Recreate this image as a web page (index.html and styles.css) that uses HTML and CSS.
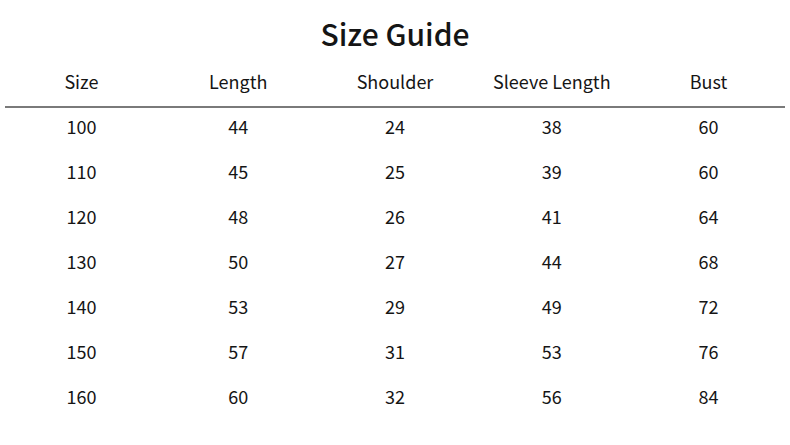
FILE: index.html
```html
<!DOCTYPE html>
<html>
<head>
<meta charset="utf-8">
<link rel="stylesheet" href="styles.css">
</head>
<body>
<div class="page">
  <h1 class="title">Size Guide</h1>
  <div class="row head">
    <div>Size</div><div>Length</div><div>Shoulder</div><div>Sleeve Length</div><div>Bust</div>
  </div>
  <div class="rule"></div>
  <div class="row"><div>100</div><div>44</div><div>24</div><div>38</div><div>60</div></div>
  <div class="row"><div>110</div><div>45</div><div>25</div><div>39</div><div>60</div></div>
  <div class="row"><div>120</div><div>48</div><div>26</div><div>41</div><div>64</div></div>
  <div class="row"><div>130</div><div>50</div><div>27</div><div>44</div><div>68</div></div>
  <div class="row"><div>140</div><div>53</div><div>29</div><div>49</div><div>72</div></div>
  <div class="row"><div>150</div><div>57</div><div>31</div><div>53</div><div>76</div></div>
  <div class="row"><div>160</div><div>60</div><div>32</div><div>56</div><div>84</div></div>
</div>
</body>
</html>
```
FILE: styles.css
```css
html, body {
  margin: 0;
  padding: 0;
  background: #ffffff;
}
.page {
  width: 790px;
  height: 445px;
  font-family: "Noto Sans CJK SC", "Open Sans", sans-serif;
  color: #151515;
}
.title {
  margin: 0;
  height: 68px;
  line-height: 66px;
  text-align: center;
  font-size: 30px;
  font-weight: 500;
}
.row {
  display: grid;
  grid-template-columns: repeat(5, 1fr);
  padding: 0 3px;
  height: 45px;
  line-height: 36px;
  font-size: 18px;
  font-weight: 400;
  text-align: center;
}
.row.head {
  height: 30px;
  line-height: 26px;
  margin-bottom: 8px;
}
.rule {
  margin: 0 5px;
  height: 2px;
  background: #7a7a7a;
}
```
